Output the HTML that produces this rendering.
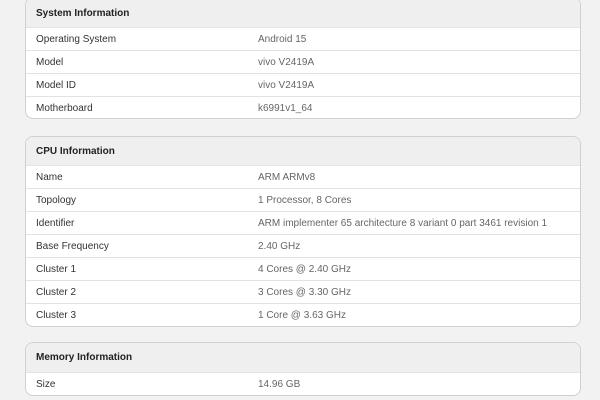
<!DOCTYPE html><html><head><style>
body{margin:0;width:600px;height:400px;background:#f2f2f2;font-family:"Liberation Sans",sans-serif;font-size:10px;overflow:hidden;position:relative}
.card{position:absolute;left:25px;width:554px;border:1px solid #d0d0d0;border-radius:8px;background:#fff;overflow:hidden}
.h{height:28px;line-height:29px;background:#efefef;padding-left:10px;font-weight:bold;color:#222;border-bottom:1px solid #e4e4e4}
.r{height:22px;line-height:24px;border-bottom:1px solid #e2e2e2;position:relative;color:#333}
.r:last-child{border-bottom:none}
.r span{position:absolute;left:10px}
.r b{font-weight:normal;position:absolute;left:232px;color:#666}
</style></head><body>
<div class="card" style="top:-3px"><div class="h" style="height:29px;line-height:31px">System Information</div>
<div class="r"><span>Operating System</span><b>Android 15</b></div>
<div class="r"><span>Model</span><b>vivo V2419A</b></div>
<div class="r"><span>Model ID</span><b>vivo V2419A</b></div>
<div class="r" style="height:21px"><span>Motherboard</span><b>k6991v1_64</b></div></div>
<div class="card" style="top:136px"><div class="h">CPU Information</div>
<div class="r"><span>Name</span><b>ARM ARMv8</b></div>
<div class="r"><span>Topology</span><b>1 Processor, 8 Cores</b></div>
<div class="r"><span>Identifier</span><b>ARM implementer 65 architecture 8 variant 0 part 3461 revision 1</b></div>
<div class="r"><span>Base Frequency</span><b>2.40 GHz</b></div>
<div class="r"><span>Cluster 1</span><b>4 Cores @ 2.40 GHz</b></div>
<div class="r"><span>Cluster 2</span><b>3 Cores @ 3.30 GHz</b></div>
<div class="r"><span>Cluster 3</span><b>1 Core @ 3.63 GHz</b></div></div>
<div class="card" style="top:342px"><div class="h" style="height:29px;line-height:29px">Memory Information</div>
<div class="r"><span>Size</span><b>14.96 GB</b></div></div>
</body></html>
